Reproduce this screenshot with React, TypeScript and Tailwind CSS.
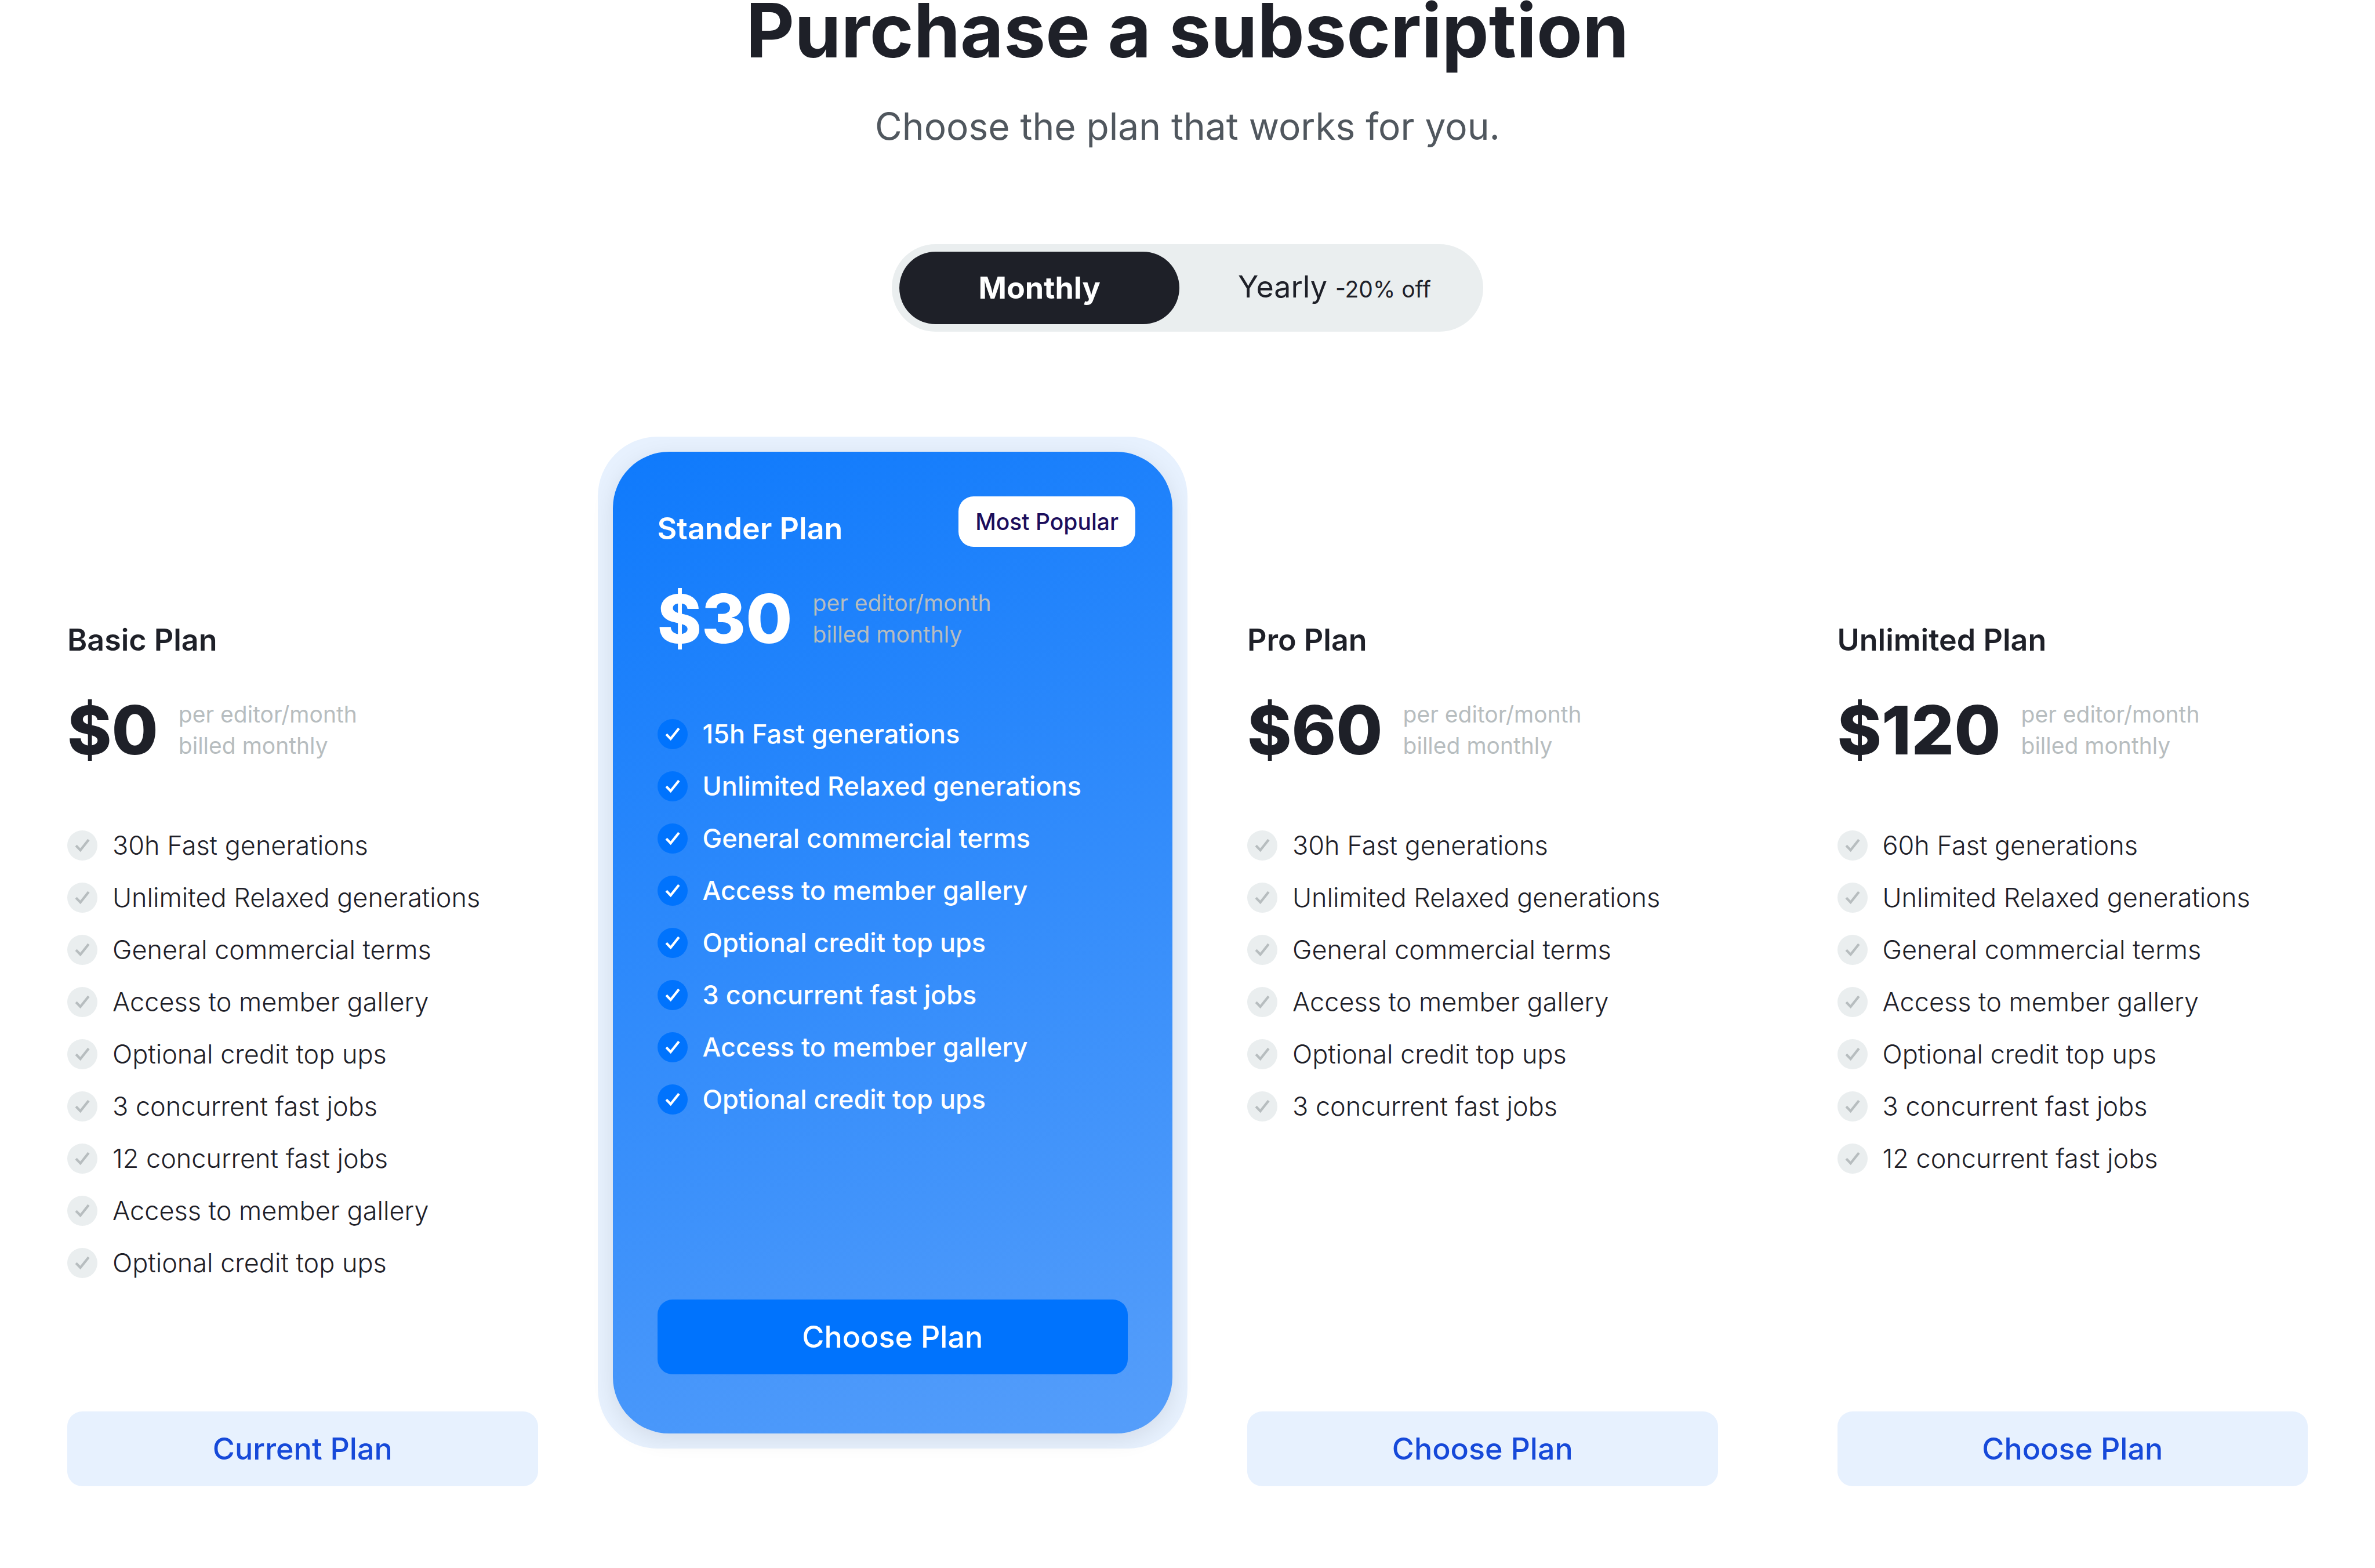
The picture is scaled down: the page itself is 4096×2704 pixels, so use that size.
import { useState } from "react";

type Plan = {
  name: string;
  price: string;
  features: string[];
  action: string;
  badge?: string;
};

const plans: Plan[] = [
  {
    name: "Basic Plan",
    price: "$0",
    features: [
      "30h Fast generations",
      "Unlimited Relaxed generations",
      "General commercial terms",
      "Access to member gallery",
      "Optional credit top ups",
      "3 concurrent fast jobs",
      "12 concurrent fast jobs",
      "Access to member gallery",
      "Optional credit top ups",
    ],
    action: "Current Plan",
  },
  {
    name: "Stander Plan",
    price: "$30",
    features: [
      "15h Fast generations",
      "Unlimited Relaxed generations",
      "General commercial terms",
      "Access to member gallery",
      "Optional credit top ups",
      "3 concurrent fast jobs",
      "Access to member gallery",
      "Optional credit top ups",
    ],
    action: "Choose Plan",
    badge: "Most Popular",
  },
  {
    name: "Pro Plan",
    price: "$60",
    features: [
      "30h Fast generations",
      "Unlimited Relaxed generations",
      "General commercial terms",
      "Access to member gallery",
      "Optional credit top ups",
      "3 concurrent fast jobs",
    ],
    action: "Choose Plan",
  },
  {
    name: "Unlimited Plan",
    price: "$120",
    features: [
      "60h Fast generations",
      "Unlimited Relaxed generations",
      "General commercial terms",
      "Access to member gallery",
      "Optional credit top ups",
      "3 concurrent fast jobs",
      "12 concurrent fast jobs",
    ],
    action: "Choose Plan",
  },
];

function Check({ featured }: { featured: boolean }) {
  return (
    <svg viewBox="0 0 200 200" className="size-[52px] shrink-0" aria-hidden="true">
      <circle cx="100" cy="100" r="100" className={featured ? "fill-[#0073fd]" : "fill-[#eaeeef]"} />
      <path
        d="M58 101 L87 131 L142 62"
        fill="none"
        strokeWidth="16"
        className={featured ? "stroke-white" : "stroke-[#b7bdbf]"}
      />
    </svg>
  );
}

function PlanBody({ plan }: { plan: Plan }) {
  const featured = Boolean(plan.badge);
  return (
    <>
      <h2 className={`text-[52px] leading-[64px] font-semibold ${featured ? "text-white" : "text-[#1e2028]"}`}>
        {plan.name}
      </h2>
      <div className="mt-[69px] flex items-center gap-[35px]">
        <span className={`text-[116px] leading-[108px] font-extrabold ${featured ? "text-white" : "text-[#1e2028]"}`}>
          {plan.price}
        </span>
        <p className="text-[39px] leading-[54px] font-normal text-[#b7bdbf]">
          per editor/month
          <br />
          billed monthly
        </p>
      </div>
      <ul className="mt-[119px] flex flex-col gap-[38px]">
        {plan.features.map((feature, i) => (
          <li key={i} className="flex items-center gap-[26px]">
            <Check featured={featured} />
            <span
              className={`text-[45px] leading-[52px] whitespace-nowrap ${
                featured ? "font-medium text-white" : "font-light text-[#1e2028]"
              }`}
            >
              {feature}
            </span>
          </li>
        ))}
      </ul>
      <div className={featured ? "mt-auto pt-[319px]" : "mt-auto pt-[230px]"}>
        <button
          type="button"
          className={`h-[129px] w-full rounded-[26px] text-[52px] leading-[64px] font-medium ${
            featured ? "bg-[#0073fd] text-white" : "bg-[#e7f1fe] text-[#1649d9]"
          }`}
        >
          {plan.action}
        </button>
      </div>
    </>
  );
}

function PlanCard({ plan }: { plan: Plan }) {
  if (plan.badge) {
    return (
      <article className="self-start rounded-[103px] bg-[#e7f1fe] p-[26px]">
        <div className="relative flex flex-col rounded-[97px] bg-[linear-gradient(157deg,#0f7afc,#569efa)] px-[77px] pt-[101px] pb-[102px] shadow-[0_10px_39px_rgba(0,0,0,0.09)]">
          <span className="absolute top-[77px] right-[64px] rounded-[26px] bg-white px-[29px] text-[39px] leading-[87px] font-medium text-[#1b0d5c]">
            {plan.badge}
          </span>
          <PlanBody plan={plan} />
        </div>
      </article>
    );
  }
  return (
    <article className="flex flex-col px-[103px] pt-[319px]">
      <PlanBody plan={plan} />
    </article>
  );
}

export default function App() {
  const [period, setPeriod] = useState<"monthly" | "yearly">("monthly");
  return (
    <main className="min-h-screen bg-white pb-[142px] font-['Inter',sans-serif] text-[#1e2028]">
      <header className="flex flex-col items-center">
        <h1 className="text-[129px] leading-[105px] font-bold">Purchase a subscription</h1>
        <p className="mt-[74px] text-[64px] leading-[78px] text-[#50575e]">Choose the plan that works for you.</p>
        <div className="mt-[164px] flex rounded-full bg-[#eaeeef] p-[13px]" role="group" aria-label="Billing period">
          <button
            type="button"
            aria-pressed={period === "monthly"}
            onClick={() => setPeriod("monthly")}
            className="h-[125px] w-[483px] rounded-full bg-[#1e2028] text-[52px] leading-[64px] font-bold text-white"
          >
            Monthly
          </button>
          <button
            type="button"
            aria-pressed={period === "yearly"}
            onClick={() => setPeriod("yearly")}
            className="flex items-center pr-[77px] pl-[101px]"
          >
            <span className="flex items-baseline gap-[14px] text-[52px] leading-[64px]">
              Yearly <span className="text-[39px]">-20% off</span>
            </span>
          </button>
        </div>
      </header>
      <section className="mt-[181px] grid grid-cols-4 px-[13px]" aria-label="Plans">
        {plans.map((plan) => (
          <PlanCard key={plan.name} plan={plan} />
        ))}
      </section>
    </main>
  );
}
